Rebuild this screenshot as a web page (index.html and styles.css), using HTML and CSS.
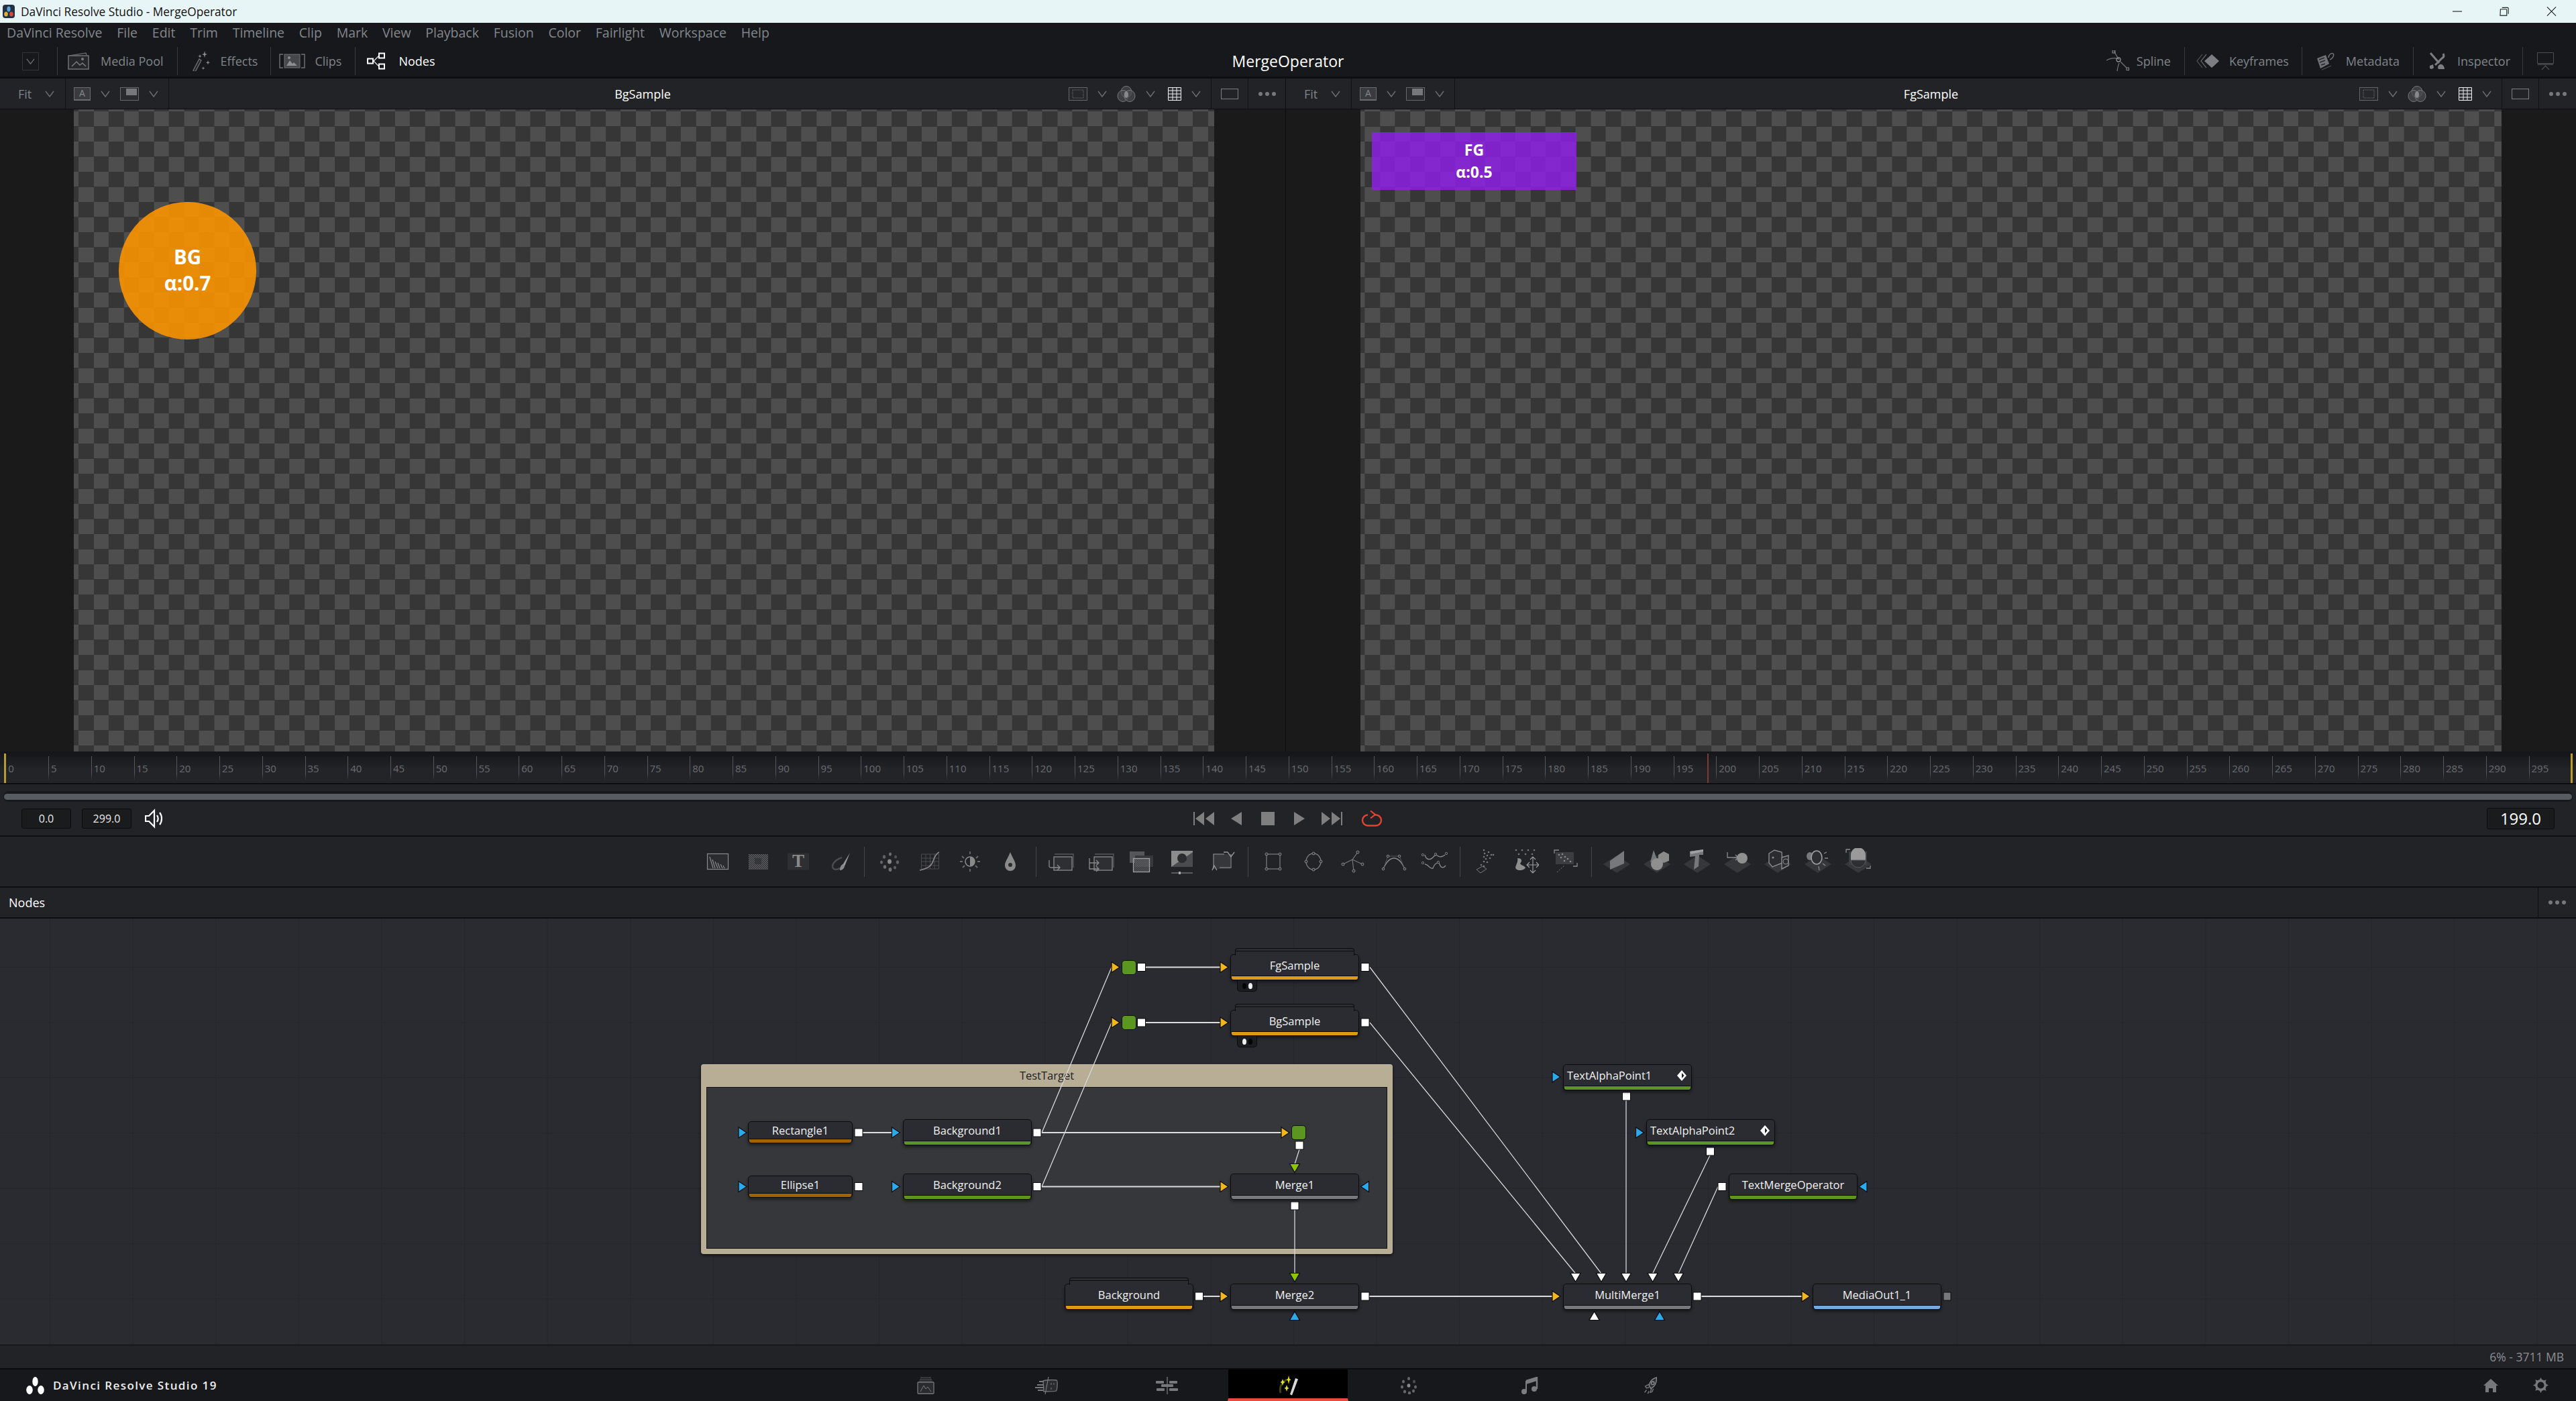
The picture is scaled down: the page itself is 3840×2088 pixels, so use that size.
FILE: index.html
```html
<!DOCTYPE html>
<html lang="en">
<head>
<meta charset="utf-8">
<title>DaVinci Resolve Studio - MergeOperator</title>
<link rel="stylesheet" href="styles.css">
</head>
<body>
<svg class="defs" width="0" height="0" aria-hidden="true">
  <defs>
    <symbol id="chev" viewBox="0 0 14 10"><path d="M1 1l6 8 6-8" fill="none" stroke="#6d6e72" stroke-width="1.4"/></symbol>
    <symbol id="dots" viewBox="0 0 28 8"><circle cx="4" cy="4" r="3" fill="#77787c"/><circle cx="14" cy="4" r="3" fill="#77787c"/><circle cx="24" cy="4" r="3" fill="#77787c"/></symbol>
    <symbol id="boxB" viewBox="0 0 28 20"><rect x=".5" y=".5" width="27" height="19" fill="#2a2b2f" stroke="#66676b"/><rect x="9" y="2" width="16" height="10" fill="#77787c"/></symbol>
    <symbol id="safe" viewBox="0 0 28 20"><rect x=".5" y=".5" width="27" height="19" fill="#26272a" stroke="#66676b"/><rect x="6" y="4" width="16" height="12" fill="none" stroke="#77787c" stroke-dasharray="1 1"/></symbol>
    <symbol id="venn" viewBox="0 0 28 24"><ellipse cx="14" cy="9" rx="8" ry="8.5" fill="#3c3d40" stroke="#77787c"/><ellipse cx="9" cy="15" rx="8" ry="8.5" fill="#4a4b4e" fill-opacity=".7" stroke="#77787c"/><ellipse cx="19" cy="15" rx="8" ry="8.5" fill="#4a4b4e" fill-opacity=".7" stroke="#77787c"/><ellipse cx="14" cy="13" rx="3" ry="5" fill="#88898d"/></symbol>
    <symbol id="grid" viewBox="0 0 20 20"><path d="M.5.5h19v19H.5zM.5 5h19M.5 10h19M.5 15h19M7 .5v19M13 .5v19" fill="#2d2e31" stroke="#f0f0f0"/></symbol>
    <symbol id="sq" viewBox="0 0 26 16"><rect x=".5" y=".5" width="25" height="15" fill="none" stroke="#77787c" stroke-width="1.2"/></symbol>
    <pattern id="nz" width="3" height="3" patternUnits="userSpaceOnUse"><rect width="1.5" height="1.5" fill="#6d6d6f"/><rect x="1.5" y="1.5" width="1.5" height="1.5" fill="#6d6d6f"/></pattern>
    <polygon id="tr" points="-6,-8 6,0 -6,8" stroke="#0c0c0e" stroke-width="1.2"/>
    <polygon id="tl" points="6,-8 -6,0 6,8" stroke="#0c0c0e" stroke-width="1.2"/>
    <polygon id="td" points="-7.5,-6.5 7.5,-6.5 0,6.5" stroke="#0c0c0e" stroke-width="1.2"/>
    <polygon id="tu" points="-7.5,6.5 7.5,6.5 0,-6.5" stroke="#0c0c0e" stroke-width="1.2"/>
    <rect id="op" x="-6" y="-6" width="12" height="12" fill="#fff" stroke="#0c0c0e"/>
  </defs>
</svg>

<header class="titlebar">
  <svg class="appicon" viewBox="0 0 18 20"><rect width="18" height="20" rx="4" fill="#243044"/><ellipse cx="9" cy="6.5" rx="2.6" ry="4" fill="#58a8e0"/><ellipse cx="5" cy="14" rx="2.8" ry="3.6" fill="#e0b030"/><ellipse cx="13" cy="14" rx="2.8" ry="3.6" fill="#d84a3a"/></svg>
  <span class="titlebar-text">DaVinci Resolve Studio - MergeOperator</span>
  <div class="winctl">
    <svg viewBox="0 0 16 16"><path d="M0 8h15" stroke="#222" stroke-width="1.2"/></svg>
    <svg viewBox="0 0 16 16"><path d="M1.5 4.5h9a1 1 0 0 1 1 1v9h-10.500zM4 2h9a1 1 0 0 1 1 1v9" fill="none" stroke="#222" stroke-width="1.2"/></svg>
    <svg viewBox="0 0 16 16"><path d="M1 1l14 14M15 1L1 15" stroke="#222" stroke-width="1.2"/></svg>
  </div>
</header>

<nav class="menubar">
  <span>DaVinci Resolve</span><span>File</span><span>Edit</span><span>Trim</span><span>Timeline</span><span>Clip</span><span>Mark</span><span>View</span><span>Playback</span><span>Fusion</span><span>Color</span><span>Fairlight</span><span>Workspace</span><span>Help</span>
</nav>

<section class="toolbar">
  <div class="tb-side">
    <div class="tb-collapse"><svg class="ic-chev" viewBox="0 0 14 10"><use href="#chev"/></svg></div>
    <div class="tb-item it-media">
      <svg class="ic-media" viewBox="0 0 33 26"><path d="M3 5L27 1l1 3" fill="none" stroke="#5f6367" stroke-width="1.500"/><rect x="1" y="5" width="30" height="20" fill="#26272a" stroke="#6f7377" stroke-width="1.500"/><path d="M6 21l7-7 5 5 4-3 5 5" fill="none" stroke="#777b7f" stroke-width="1.500"/><circle cx="22" cy="10" r="2" fill="#777b7f"/></svg>
      <span>Media Pool</span>
    </div>
    <div class="tb-item it-fx">
      <svg class="ic-fx" viewBox="0 0 31 30"><path d="M4 29l9-17 3 2-9 17z" fill="#26272a" stroke="#6f7377" stroke-width="1.300"/><path d="M21 0l1 4 3 1-3 1-1 4-1-4-3-1 3-1zM14 5l.7 2 2 .7-2 .7-.7 2-.7-2-2-.7 2-.7zM26 14l.8 2.500 2.500.8-2.500.8-.8 2.500-.8-2.500-2.500-.8 2.500-.8zM19 23l.6 2 2 .6-2 .6-.6 2-.6-2-2-.6 2-.6z" fill="#8a8e92"/></svg>
      <span>Effects</span>
    </div>
    <div class="tb-item it-clips">
      <svg class="ic-clips" viewBox="0 0 39 22"><path d="M6 1H1v20h5M33 1h5v20h-5" fill="none" stroke="#6f7377" stroke-width="1.400"/><rect x="8" y="1" width="23" height="20" fill="#45474a" stroke="#6f7377"/><path d="M11 18l5-8 4 5 2-2 5 5z" fill="#8a8e92"/><circle cx="15" cy="6" r="2" fill="#8a8e92"/></svg>
      <span>Clips</span>
    </div>
    <div class="tb-item it-nodes is-active">
      <svg class="ic-nodes" viewBox="0 0 31 26"><path d="M11 13L19 5M11 13l8 8" fill="none" stroke="#e6e6e6" stroke-width="1.300"/><rect x="2" y="9.500" width="8" height="7" fill="none" stroke="#fff" stroke-width="2"/><rect x="19" y="1.500" width="8" height="7" fill="none" stroke="#fff" stroke-width="2"/><rect x="19" y="17.500" width="8" height="7" fill="none" stroke="#fff" stroke-width="2"/></svg>
      <span>Nodes</span>
    </div>
  </div>
  <div class="tb-title">MergeOperator</div>
  <div class="tb-side tb-right">
    <div class="tb-item it-spline">
      <svg class="ic-spline" viewBox="0 0 34 32"><path d="M0 15C8 11 14 11 18 13L11 1M21 17l9 9M19 19c-2 4-2 7-3 12" fill="none" stroke="#6f7377" stroke-width="1.300"/><circle cx="18" cy="14" r="3" fill="none" stroke="#8a8e92" stroke-width="1.300"/><rect x="9" y="0" width="4" height="4" fill="none" stroke="#8a8e92"/><rect x="30" y="26" width="3.500" height="3.500" fill="none" stroke="#8a8e92"/></svg>
      <span>Spline</span>
    </div>
    <div class="tb-item it-key">
      <svg class="ic-key" viewBox="0 0 35 22"><path d="M9 1L1 11l8 10" fill="none" stroke="#55585c" stroke-width="1.200"/><path d="M15 1L7 11l8 10" fill="none" stroke="#5f6367" stroke-width="1.300"/><path d="M23 1L12 11l11 10 11-10z" fill="#7b7f83"/></svg>
      <span>Keyframes</span>
    </div>
    <div class="tb-item it-meta">
      <svg class="ic-meta" viewBox="0 0 28 28"><path d="M2 10L15 5l5 13L7 25z" fill="#6f7377"/><path d="M19 9c0-4 4-8 7-6 2 2-1 8-5 9" fill="none" stroke="#6f7377" stroke-width="1.500"/><path d="M5 12l8-3M6 16l8-3M8 20l6-2" stroke="#26272a" stroke-width="1.500"/><path d="M9 27l14-6" stroke="#55585c"/></svg>
      <span>Metadata</span>
    </div>
    <div class="tb-item it-insp">
      <svg class="ic-insp" viewBox="0 0 25 26"><path d="M3 1l13 15" stroke="#7b7f83" stroke-width="3"/><path d="M22 2c2 4 0 6-2 7l-10 10" fill="none" stroke="#7b7f83" stroke-width="3"/><path d="M17 18c4-1 7 3 7 7h-9c-2-3 0-6 2-7zM2 20l5-2 1 5-3 2-3-1z" fill="#7b7f83"/></svg>
      <span>Inspector</span>
    </div>
    <div class="tb-end">
      <svg class="ic-mon" viewBox="0 0 25 26"><path d="M.5.5h24v16H.5z" fill="none" stroke="#4b4d50"/><path d="M1 18h23" stroke="#4b4d50" stroke-width="1.500"/><path d="M7 26l5.500-6 5.500 6" fill="none" stroke="#4b4d50" stroke-width="1.300"/></svg>
    </div>
  </div>
</section>

<section class="viewers">
  <article class="viewer viewer-left">
    <div class="vh">
      <div class="vh-group">
        <div class="vh-fit"><span>Fit</span><svg class="chev"><use href="#chev"/></svg></div>
        <div class="vh-ab">
          <span class="boxa">A</span><svg class="chev"><use href="#chev"/></svg>
          <svg class="box"><use href="#boxB"/></svg><svg class="chev"><use href="#chev"/></svg>
        </div>
      </div>
      <div class="vh-name">BgSample</div>
      <div class="vh-group vh-end">
        <div class="vh-opts">
          <svg class="box"><use href="#safe"/></svg><svg class="chev"><use href="#chev"/></svg>
          <svg class="vennbox"><use href="#venn"/></svg><svg class="chev"><use href="#chev"/></svg>
          <svg class="gridbox"><use href="#grid"/></svg><svg class="chev"><use href="#chev"/></svg>
        </div>
        <div class="vh-cell"><svg class="sqbox"><use href="#sq"/></svg></div>
        <div class="vh-cell"><svg class="dotbox"><use href="#dots"/></svg></div>
      </div>
    </div>
    <div class="vbody">
      <div class="checker checker-left">
        <div class="bg-sample"><span>BG</span><span>α:0.7</span></div>
      </div>
    </div>
  </article>
  <article class="viewer viewer-right">
    <div class="vh">
      <div class="vh-group">
        <div class="vh-fit"><span>Fit</span><svg class="chev"><use href="#chev"/></svg></div>
        <div class="vh-ab">
          <span class="boxa">A</span><svg class="chev"><use href="#chev"/></svg>
          <svg class="box"><use href="#boxB"/></svg><svg class="chev"><use href="#chev"/></svg>
        </div>
      </div>
      <div class="vh-name">FgSample</div>
      <div class="vh-group vh-end">
        <div class="vh-opts">
          <svg class="box"><use href="#safe"/></svg><svg class="chev"><use href="#chev"/></svg>
          <svg class="vennbox"><use href="#venn"/></svg><svg class="chev"><use href="#chev"/></svg>
          <svg class="gridbox"><use href="#grid"/></svg><svg class="chev"><use href="#chev"/></svg>
        </div>
        <div class="vh-cell"><svg class="sqbox"><use href="#sq"/></svg></div>
        <div class="vh-cell"><svg class="dotbox"><use href="#dots"/></svg></div>
      </div>
    </div>
    <div class="vbody vbody-right">
      <div class="checker checker-right">
        <div class="fg-sample"><span>FG</span><span>α:0.5</span></div>
      </div>
    </div>
  </article>
</section>

<section class="ruler">
  <span>0</span><span>5</span><span>10</span><span>15</span><span>20</span><span>25</span><span>30</span><span>35</span><span>40</span><span>45</span><span>50</span><span>55</span><span>60</span><span>65</span><span>70</span><span>75</span><span>80</span><span>85</span><span>90</span><span>95</span><span>100</span><span>105</span><span>110</span><span>115</span><span>120</span><span>125</span><span>130</span><span>135</span><span>140</span><span>145</span><span>150</span><span>155</span><span>160</span><span>165</span><span>170</span><span>175</span><span>180</span><span>185</span><span>190</span><span>195</span><span>200</span><span>205</span><span>210</span><span>215</span><span>220</span><span>225</span><span>230</span><span>235</span><span>240</span><span>245</span><span>250</span><span>255</span><span>260</span><span>265</span><span>270</span><span>275</span><span>280</span><span>285</span><span>290</span><span>295</span>
  <i class="mark mark-start"></i><i class="mark mark-end"></i><i class="playhead"></i>
</section>

<section class="transport">
  <div class="scrub"><div class="scrub-fill"></div></div>
  <div class="tp-row">
    <div class="tp-left">
      <span class="field">0.0</span><span class="field">299.0</span>
      <svg class="ic-spk" viewBox="0 0 27 30"><path d="M1 11h5l8-8v24l-8-8H1z" fill="none" stroke="#fff" stroke-width="2.200"/><path d="M18 10c2 3 2 7 0 10M22 6c4 5 4 13 0 18" fill="none" stroke="#fff" stroke-width="2.200"/></svg>
    </div>
    <div class="tp-mid">
      <svg class="ic-skip" viewBox="0 0 31 20"><path d="M0 0h2v20H0zM16 0L3 10l13 10zM31 0L18 10l13 10z" fill="#7f7f7f"/></svg>
      <svg class="ic-tri" viewBox="0 0 16 20"><path d="M16 0L0 10l16 10z" fill="#7f7f7f"/></svg>
      <svg class="ic-stop" viewBox="0 0 20 20"><rect width="20" height="20" fill="#7f7f7f"/></svg>
      <svg class="ic-tri" viewBox="0 0 16 20"><path d="M0 0l16 10L0 20z" fill="#7f7f7f"/></svg>
      <svg class="ic-skip" viewBox="0 0 31 20"><path d="M31 0h-2v20h2zM15 0l13 10-13 10zM0 0l13 10L0 20z" fill="#7f7f7f"/></svg>
      <svg class="ic-loop" viewBox="0 0 32 24"><path d="M10 6.500a8 8 0 0 0-8 8 8 8 0 0 0 8 8h12a8 8 0 0 0 8-8 8 8 0 0 0-8-8h-3" fill="none" stroke="#e8412f" stroke-width="2.400"/><path d="M14 .5L21 6l-7 5.500" fill="none" stroke="#e8412f" stroke-width="2.200"/></svg>
    </div>
    <div class="tp-right"><span class="field field-big">199.0</span></div>
  </div>
</section>

<section class="tools">
  <svg class="t" viewBox="0 0 40 40"><rect x="4.500" y="8.500" width="31" height="23" fill="#2b2c30" stroke="#8a8a8a" stroke-width="1.200"/><path d="M8 13l5 17M12 17l4 13M16 20l4 10M20 22l3 8M24 24l3 6M28 26l2 4" stroke="#8a8a8a" stroke-width="1.200"/></svg>
  <svg class="t" viewBox="0 0 40 40"><rect x="6" y="9" width="29" height="23" fill="url(#nz)"/><rect x="15" y="15" width="10" height="9" fill="#2a2b2e" opacity=".6"/></svg>
  <svg class="t" viewBox="0 0 40 40"><rect x="4" y="7.500" width="32" height="25" fill="#2e2f33"/><text x="20" y="28" class="t-letter" text-anchor="middle">T</text></svg>
  <svg class="t" viewBox="0 0 40 40"><path d="M25 14C13 18 8 27 13 31c3 2 7 0 10-1" fill="none" stroke="#4a4b4e" stroke-width="2.500"/><path d="M37 7L26 25l3 2z" fill="#9a9a9a"/><path d="M26 24c-3 2-4 5-4 9 3 0 6-2 7-6z" fill="#8a8a8a"/></svg>
  <i class="t-sep"></i>
  <svg class="t" viewBox="0 0 40 40"><g fill="#6f6f72"><ellipse cx="21" cy="9" rx="2" ry="2.500"/><ellipse cx="12" cy="13" rx="2.200" ry="2.800" opacity=".8"/><ellipse cx="29" cy="13" rx="2" ry="2.500" opacity=".6"/><ellipse cx="8" cy="21" rx="2" ry="2.500" opacity=".9"/><ellipse cx="32" cy="21" rx="2.200" ry="2.800" opacity=".8"/><ellipse cx="13" cy="28" rx="2.200" ry="2.800"/><ellipse cx="21" cy="32" rx="2.400" ry="3"/><ellipse cx="28" cy="29" rx="2" ry="2.500" opacity=".8"/><ellipse cx="20" cy="20" rx="3" ry="3.500" fill="#8a8a8a"/></g></svg>
  <svg class="t" viewBox="0 0 40 40"><path d="M7.500 9h26v22h-26zM7.500 15h26M7.500 20h26M7.500 26h26M14 9v22M20.500 9v22M27 9v22" fill="none" stroke="#4a4b4e"/><path d="M5 33c10-2 18-6 20-14 2-6 5-11 9-13" fill="none" stroke="#8a8a8a" stroke-width="1.500"/></svg>
  <svg class="t" viewBox="0 0 40 40"><circle cx="20" cy="20" r="7" fill="none" stroke="#8a8a8a" stroke-width="1.600"/><path d="M20 13a7 7 0 0 1 0 14z" fill="#8a8a8a"/><path d="M20 5v4M20 31v4M8 12l3 3M32 12l-3 3M5 20h4M31 20h4M9 29l3-3M31 29l-3-3" stroke="#6a6a6c" stroke-width="1.800"/></svg>
  <svg class="t" viewBox="0 0 40 40"><path d="M20 6c4 10 8 14 8 20a8 8 0 0 1-16 0c0-6 4-10 8-20z" fill="#8a8a8a"/><circle cx="20" cy="25" r="3" fill="#2b2c30"/></svg>
  <i class="t-sep"></i>
  <svg class="t" viewBox="0 0 40 40"><path d="M10 9h28v20" fill="none" stroke="#58595c" stroke-width="1.300"/><rect x="9" y="13" width="27" height="20" fill="#2e2f33" stroke="#8a8a8a" stroke-width="1.300"/><path d="M2 18v9c0 2 2 2 4 2h12M14 25l4 4-4 4" fill="none" stroke="#8a8a8a" stroke-width="1.300"/></svg>
  <svg class="t" viewBox="0 0 40 40"><path d="M10 9h28v20" fill="none" stroke="#58595c" stroke-width="1.300"/><rect x="9" y="13" width="27" height="20" fill="#2e2f33" stroke="#8a8a8a" stroke-width="1.300"/><path d="M2 15v16h14M2 22h14M12 18l4 4-4 4M12 27l4 4-4 4" fill="none" stroke="#8a8a8a" stroke-width="1.300"/></svg>
  <svg class="t" viewBox="0 0 40 40"><rect x="2" y="5" width="22" height="17" fill="#56575a"/><rect x="10" y="11" width="27" height="17" fill="#37383c"/><rect x="7.500" y="15.500" width="24" height="20" fill="url(#nz)" stroke="#a0a0a0" stroke-width="1.300"/></svg>
  <svg class="t" viewBox="0 0 40 40"><rect x="4" y="4" width="32" height="24" fill="#8c8c8c"/><path d="M4 28L36 6v22z" fill="#4a4b4e"/><circle cx="20" cy="15" r="7" fill="#2b2c30"/><path d="M4 37h32" stroke="#7a7a7a" stroke-width="1.300"/><rect x="15" y="35" width="3" height="4" fill="#aaa"/></svg>
  <svg class="t" viewBox="0 0 40 40"><rect x="6" y="9" width="26" height="22" fill="#36373b"/><path d="M7 31V9h16M33 9v20H16" fill="none" stroke="#77787b" stroke-width="1.400"/><path d="M28 6l5 7 5-7M5 33l3-7 4 7M22 6h6" fill="none" stroke="#9a9a9a" stroke-width="1.300"/></svg>
  <i class="t-sep"></i>
  <svg class="t" viewBox="0 0 40 40"><rect x="10" y="9" width="20" height="22" fill="none" stroke="#77787b" stroke-width="1.300"/><g fill="#2b2c30" stroke="#8a8a8a"><circle cx="10" cy="9" r="2"/><circle cx="30" cy="9" r="2"/><circle cx="10" cy="31" r="2"/><circle cx="30" cy="31" r="2"/></g></svg>
  <svg class="t" viewBox="0 0 40 40"><ellipse cx="20" cy="20" rx="11" ry="12" fill="none" stroke="#77787b" stroke-width="1.300"/><g fill="#2b2c30" stroke="#8a8a8a"><circle cx="20" cy="8" r="2"/><circle cx="9" cy="20" r="2"/><circle cx="31" cy="20" r="2"/><circle cx="20" cy="32" r="2"/></g></svg>
  <svg class="t" viewBox="0 0 40 40"><path d="M26 6L18 17 4 24M18 17l15 7M18 17l2 17" fill="none" stroke="#77787b" stroke-width="1.200"/><g fill="#2b2c30" stroke="#8a8a8a"><circle cx="26" cy="6" r="2"/><circle cx="4" cy="24" r="2"/><circle cx="33" cy="24" r="2"/><circle cx="20" cy="34" r="2"/></g></svg>
  <svg class="t" viewBox="0 0 40 40"><path d="M4 31C8 22 14 15 20 15s12 7 16 16" fill="none" stroke="#8a8a8a" stroke-width="1.400"/><path d="M4 31l7-19h17l8 19" fill="none" stroke="#55565a"/><g fill="#2b2c30" stroke="#8a8a8a"><circle cx="4" cy="31" r="1.800"/><circle cx="11" cy="12" r="1.800"/><circle cx="28" cy="12" r="1.800"/><circle cx="36" cy="31" r="1.800"/></g></svg>
  <svg class="t" viewBox="0 0 40 40"><path d="M6 10c2 8 8 8 12 4 2-4 6-4 8-2 3 2 8 0 10-2M6 24c5 0 8 8 12 6 3-8 8-10 10-6 2 6 6 6 9 2" fill="none" stroke="#8a8a8a" stroke-width="1.300"/><g fill="#2b2c30" stroke="#77787b"><circle cx="3" cy="10" r="1.700"/><circle cx="22" cy="9" r="1.700"/><circle cx="38" cy="8" r="1.700"/><circle cx="3" cy="22" r="1.700"/><circle cx="26" cy="21" r="1.700"/></g></svg>
  <i class="t-sep"></i>
  <svg class="t" viewBox="0 0 40 40"><g fill="#77787b"><circle cx="18" cy="3" r="1.300"/><circle cx="25" cy="6" r="1.300"/><circle cx="19" cy="8" r="1.300"/><circle cx="29" cy="10" r="1.300"/><circle cx="23" cy="11" r="1.300"/><circle cx="18" cy="13" r="1.300"/><circle cx="27" cy="15" r="1.300"/><circle cx="21" cy="16" r="1.300"/><circle cx="32" cy="10" r="1.300"/><circle cx="18" cy="20" r="1.300"/><circle cx="23" cy="21" r="1.300"/><circle cx="14" cy="25" r="1.300"/><circle cx="18" cy="27" r="1.300"/></g><path d="M7 32l9-5 6 4-9 6z" fill="none" stroke="#77787b"/></svg>
  <svg class="t" viewBox="0 0 40 40"><g fill="#77787b"><circle cx="6" cy="3" r="1.300"/><circle cx="15" cy="3" r="1.300"/><circle cx="24" cy="3" r="1.300"/><circle cx="33" cy="3" r="1.300"/><circle cx="10" cy="9" r="1.300"/><circle cx="20" cy="9" r="1.300"/><circle cx="30" cy="9" r="1.300"/></g><path d="M8 15c6 0 8 3 4 8 2 3 6 3 8 6-2 5-12 5-14 2-3-4 4-9 2-16z" fill="#8f8f8f"/><path d="M31 13v24M23 25h16M27 17l4-4 4 4M27 33l4 4 4-4M26 21l-4 4 4 4M36 21l4 4-4 4" fill="none" stroke="#a0a0a0" stroke-width="1.100"/></svg>
  <svg class="t" viewBox="0 0 40 40"><rect x="5" y="6" width="27" height="18" fill="#3c3d41"/><path d="M3 8V3h7M37 22v5h-6" fill="none" stroke="#8a8a8a" stroke-width="1.300"/><g fill="#8a8a8a"><circle cx="10" cy="10" r="1.300"/><circle cx="15" cy="9" r="1.300"/><circle cx="13" cy="14" r="1.300"/><circle cx="19" cy="13" r="1.300"/><circle cx="23" cy="16" r="1.300"/><circle cx="18" cy="19" r="1.300"/><circle cx="27" cy="20" r="1.300"/></g><path d="M7 36l11-10" stroke="#77787b" stroke-dasharray="2 2"/></svg>
  <i class="t-sep"></i>
  <svg class="t" viewBox="0 0 40 40"><path d="M0 24l20-13 20 13-20 13z" fill="#36373b"/><path d="M10 19L31 4v19L10 32z" fill="#77787b"/></svg>
  <svg class="t" viewBox="0 0 40 40"><path d="M0 24l20-13 20 13-20 13z" fill="#36373b"/><path d="M10 21L15 3l6 16z" fill="#77787b"/><path d="M22 10l8-5 8 4v10l-8 3-8-4z" fill="#8a8a8a"/><circle cx="20" cy="24" r="9" fill="#8f8f8f"/></svg>
  <svg class="t" viewBox="0 0 40 40"><path d="M0 24l20-13 20 13-20 13z" fill="#36373b"/><path d="M9 5L29 2v8h-6l-1 17-7 5 2-20-8 1z" fill="#77787b"/><path d="M9 5L29 2v3L11 9z" fill="#a0a0a0"/></svg>
  <svg class="t" viewBox="0 0 40 40"><path d="M0 24l20-13 20 13-20 13z" fill="#36373b"/><path d="M5 6v8h16M17 10l4 4-4 4" fill="none" stroke="#8a8a8a" stroke-width="1.300"/><circle cx="27" cy="15" r="8" fill="#8f8f8f"/></svg>
  <svg class="t" viewBox="0 0 40 40"><path d="M0 24l20-13 20 13-20 13z" fill="#36373b"/><path d="M7 8l8-5 11 3 1 16-15 6-5-6z" fill="#2b2c30" stroke="#8a8a8a" stroke-width="1.400"/><path d="M26 14l10-3v15l-10 5z" fill="#2b2c30" stroke="#8a8a8a" stroke-width="1.400"/><circle cx="13" cy="14" r="1.600" fill="#8a8a8a"/><circle cx="32" cy="20" r="4" fill="none" stroke="#8a8a8a"/></svg>
  <svg class="t" viewBox="0 0 40 40"><path d="M0 24l20-13 20 13-20 13z" fill="#36373b"/><ellipse cx="8" cy="12" rx="5" ry="6" fill="#77787b"/><ellipse cx="18" cy="14" rx="8" ry="10" fill="#2e2f33" stroke="#a0a0a0" stroke-width="1.600"/><path d="M29 8l4-2M30 15h5M27 23l4 3M21 27l1 6" stroke="#8a8a8a" stroke-width="1.300"/></svg>
  <svg class="t" viewBox="0 0 40 40"><path d="M0 24l20-13 20 13-20 13z" fill="#36373b"/><rect x="6" y="5" width="27" height="20" fill="#3c3d41"/><path d="M9 10a11 11 0 0 1 22 0v8H9z" fill="#9a9a9a"/><path d="M9 18h22a11 11 0 0 1-22 0z" fill="#2e2f33" stroke="#58595c"/><path d="M2 7V2h6M38 26v4h-6" fill="none" stroke="#8a8a8a" stroke-width="1.300"/></svg>
</section>

<section class="nodes-head">
  <span class="nodes-title">Nodes</span>
  <div class="nodes-more"><svg class="dotbox"><use href="#dots"/></svg></div>
</section>

<section class="canvas">
  <div class="group">
    <div class="group-title">TestTarget</div>
    <div class="group-body"></div>
  </div>
  <svg class="wires" viewBox="0 1369 3840 635">
    <g class="wire-h">
      <path d="M1286 1688H1330M1553 1688H1911M1553 1768.500H1820M1708 1441.500H1820M1708 1524H1820M1793 1932H1820M2041 1932H2314M2536 1932H2687"/>
    </g>
    <g class="wire-d">
      <path d="M1553 1688L1657 1441.500M1553 1768.500L1657 1524M1937 1713L1930 1735M1930 1803V1898M2042 1524L2348.600 1898M2042 1441.500L2387 1898M2424 1640V1898M2549 1722L2463.600 1898M2561 1768.500L2502 1898"/>
    </g>
    <g fill="#f2b71c">
      <use href="#tr" x="1663" y="1441.500"/><use href="#tr" x="1663" y="1524"/><use href="#tr" x="1825" y="1441.500"/><use href="#tr" x="1825" y="1524"/><use href="#tr" x="1825" y="1768.500"/><use href="#tr" x="1825" y="1932"/><use href="#tr" x="1916" y="1688"/><use href="#tr" x="2320" y="1932"/><use href="#tr" x="2692" y="1932"/>
    </g>
    <g fill="#2aa9ec">
      <use href="#tr" x="1107" y="1688"/><use href="#tr" x="1107" y="1768.500"/><use href="#tr" x="1335.500" y="1688"/><use href="#tr" x="1335.500" y="1768.500"/><use href="#tr" x="2320" y="1605"/><use href="#tr" x="2444.500" y="1688"/>
      <use href="#tl" x="2034.500" y="1768.500"/><use href="#tl" x="2777" y="1768.500"/>
      <use href="#tu" x="1930" y="1961"/><use href="#tu" x="2474" y="1961"/>
    </g>
    <g fill="#8cc400"><use href="#td" x="1930" y="1741"/><use href="#td" x="1930" y="1904"/></g>
    <g fill="#fff">
      <use href="#td" x="2348.600" y="1904"/><use href="#td" x="2387" y="1904"/><use href="#td" x="2424" y="1904"/><use href="#td" x="2463.600" y="1904"/><use href="#td" x="2502" y="1904"/><use href="#tu" x="2376.600" y="1961"/>
    </g>
    <g>
      <use href="#op" x="1701.500" y="1441.500"/><use href="#op" x="1701.500" y="1524"/><use href="#op" x="2035" y="1441.500"/><use href="#op" x="2035" y="1524"/><use href="#op" x="1280" y="1688"/><use href="#op" x="1280" y="1768.500"/><use href="#op" x="1546" y="1688"/><use href="#op" x="1546" y="1768.500"/><use href="#op" x="1937" y="1707"/><use href="#op" x="1930" y="1797"/><use href="#op" x="1787.500" y="1932"/><use href="#op" x="2035" y="1932"/><use href="#op" x="2530" y="1932"/><use href="#op" x="2424.500" y="1634"/><use href="#op" x="2549.500" y="1716"/><use href="#op" x="2567" y="1768.500"/>
      <rect x="2897" y="1926" width="11" height="12" fill="#77787c" stroke="#0c0c0e"/>
    </g>
  </svg>

  <i class="pipe pipe-a"></i><i class="pipe pipe-b"></i><i class="pipe pipe-c"></i>

  <div class="node n-big n-fg stack orange">FgSample</div>
  <div class="badge badge-fg"><b></b><b class="on"></b></div>
  <div class="node n-big n-bg stack orange">BgSample</div>
  <div class="badge badge-bg"><b class="on"></b><b></b></div>
  <div class="node n-small n-rect brown">Rectangle1</div>
  <div class="node n-small n-ell brown">Ellipse1</div>
  <div class="node n-big n-b1 green">Background1</div>
  <div class="node n-big n-b2 green">Background2</div>
  <div class="node n-big n-m1 gray">Merge1</div>
  <div class="node n-big n-back stack orange">Background</div>
  <div class="node n-big n-m2 gray">Merge2</div>
  <div class="node n-big n-mm gray">MultiMerge1</div>
  <div class="node n-big n-t1 green n-key"><span>TextAlphaPoint1</span><svg class="kf" viewBox="0 0 14 16"><path d="M7 0l7 8-7 8-7-8z" fill="#fff"/><path d="M7 4l3.500 4L7 12z" fill="#1a1b1e"/></svg></div>
  <div class="node n-big n-t2 green n-key"><span>TextAlphaPoint2</span><svg class="kf" viewBox="0 0 14 16"><path d="M7 0l7 8-7 8-7-8z" fill="#fff"/><path d="M7 4l3.500 4L7 12z" fill="#1a1b1e"/></svg></div>
  <div class="node n-big n-tm green">TextMergeOperator</div>
  <div class="node n-big n-out blue">MediaOut1_1</div>
</section>

<section class="status"><span>6% - 3711 MB</span></section>

<footer class="pages">
  <div class="brand">
    <svg class="logo" viewBox="0 0 27 26"><ellipse cx="13.500" cy="7" rx="4.200" ry="7" fill="#fff"/><ellipse cx="5" cy="19.500" rx="4.800" ry="6.500" fill="#fff"/><ellipse cx="22" cy="19.500" rx="4.800" ry="6.500" fill="#fff"/></svg>
    <span>DaVinci Resolve Studio 19</span>
  </div>
  <div class="page-tabs">
    <div class="page-tab"><svg class="pg" viewBox="0 0 28 26"><path d="M6 1h16M5 3.500h18M4 6h20" stroke="#55565a"/><rect x="2" y="8" width="24" height="17" rx="1" fill="#2a2b2e" stroke="#77787b" stroke-width="1.300"/><path d="M6 22l5-9 3 5 3-3 5 7" fill="none" stroke="#77787b"/></svg></div>
    <div class="page-tab"><svg class="pg" viewBox="0 0 38 26"><path d="M14 6c2-1 16-2 20-1 2 1 1 16-1 16-3 1-14 1-18 1z" fill="#2a2b2e" stroke="#77787b" stroke-width="1.300"/><path d="M22 0l-5 26" stroke="#77787b" stroke-width="1.200"/><path d="M8 7h7M5 12h10M2 16h12M6 20h8" stroke="#77787b" stroke-width="2"/><path d="M26 9v3M30 9v3M26 16v3" stroke="#77787b"/></svg></div>
    <div class="page-tab"><svg class="pg" viewBox="0 0 36 26"><path d="M18 0v26" stroke="#77787b" stroke-width="1.300"/><g fill="#77787b"><rect x="1" y="6" width="12" height="4" rx="1"/><rect x="21" y="6" width="12" height="4" rx="1"/><rect x="9" y="11" width="18" height="4" rx="1"/><rect x="2" y="17" width="12" height="4" rx="1"/><rect x="21" y="17" width="13" height="4" rx="1"/></g></svg></div>
    <div class="page-tab page-active"><svg class="pg pg-fusion" viewBox="0 0 34 30"><path d="M6 26C3 16 9 10 15 6" fill="none" stroke="#5a6018" stroke-width="3" opacity=".7"/><path d="M20 28l8-24 4 1.500-9 24z" fill="#d8d8d8"/><path d="M18 0l1.200 5 2.300 1.200-2.300 1.200L18 13l-1.200-5.600L14.500 6.200l2.300-1.200zM9 5l1.200 3.500L12.500 10l-2.300 1.200L9 15l-1.200-3.800L5.500 10l2.300-1.500zM15 14l1.200 3.500 2.300 1.500-2.300 1.200L15 24l-1.200-3.800L11.500 19l2.300-1.500z" fill="#e2e225"/></svg></div>
    <div class="page-tab"><svg class="pg" viewBox="0 0 26 26"><g fill="#66676a"><ellipse cx="13" cy="2.500" rx="2" ry="2.500"/><ellipse cx="5" cy="7" rx="2" ry="2.500"/><ellipse cx="21" cy="7" rx="2" ry="2.500" opacity=".7"/><ellipse cx="3" cy="15" rx="2" ry="2.500"/><ellipse cx="23" cy="15" rx="2" ry="2.500"/><ellipse cx="7" cy="22" rx="2.200" ry="2.500"/><ellipse cx="14" cy="24" rx="2.200" ry="2.500"/><ellipse cx="20" cy="21" rx="2" ry="2.500"/><ellipse cx="13" cy="13" rx="2.400" ry="2.800" fill="#8a8a8a"/></g></svg></div>
    <div class="page-tab"><svg class="pg" viewBox="0 0 24 26"><path d="M7 6l16-5v17" fill="none" stroke="#7d7d7f" stroke-width="2.400"/><path d="M7 6l16-5v5L7 11z" fill="#7d7d7f"/><path d="M7 6v16" stroke="#7d7d7f" stroke-width="2"/><ellipse cx="4" cy="22" rx="4" ry="4" fill="#7d7d7f"/><ellipse cx="19" cy="18" rx="4" ry="4" fill="#7d7d7f"/></svg></div>
    <div class="page-tab"><svg class="pg" viewBox="0 0 26 28"><path d="M23 1c-7 2-11 7-12 13l3 5c6-3 10-8 9-18z" fill="#2f3033" stroke="#88898c" stroke-width="1.500"/><circle cx="17" cy="10" r="2.500" fill="none" stroke="#88898c" stroke-width="1.500"/><path d="M11 12l-6 3 2 3 4-1M15 19l-2 6 3-1 2-5M7 21l-3 4M11 23l-2 4" fill="none" stroke="#77787b" stroke-width="1.500"/></svg></div>
  </div>
  <div class="page-end">
    <svg class="ic-home" viewBox="0 0 22 20"><path d="M11 0l11 10h-3v10h-5v-6H8v6H3V10H0z" fill="#77787b"/></svg>
    <svg class="ic-gear" viewBox="0 0 24 24"><path d="M12 5a7 7 0 1 0 0 14 7 7 0 0 0 0-14z" fill="none" stroke="#77787b" stroke-width="3.500"/><path d="M12 0l2 4h-4zM12 24l-2-4h4zM0 12l4-2v4zM24 12l-4 2v-4zM3.500 3.500l4.500 1.500-3 3zM20.500 20.500l-4.500-1.500 3-3zM3.500 20.500l1.500-4.500 3 3zM20.500 3.500l-1.500 4.500-3-3z" fill="#77787b"/></svg>
  </div>
</footer>
</body>
</html>
```
FILE: styles.css
```css
* { box-sizing: border-box; }
html, body { margin: 0; padding: 0; background: #17181b; }
body {
  width: 3840px; height: 2088px; overflow: hidden;
  display: flex; flex-direction: column;
  font-family: "Open Sans", "Liberation Sans", sans-serif;
}
.defs { position: absolute; }
svg { display: block; flex: none; }

/* window title */
.titlebar {
  height: 34px; flex: none; display: flex; align-items: center;
  background: #e8f5f7; color: #111; font-size: 17.3px; padding-left: 4px;
}
.appicon { width: 18px; height: 20px; margin-right: 9px; }
.titlebar-text { flex: 1; }
.winctl { display: flex; gap: 55px; padding-right: 29px; }
.winctl svg { width: 15px; height: 16px; }

/* menu */
.menubar {
  height: 36px; flex: none; display: flex; align-items: flex-start; gap: 21.75px;
  background: #17181b; color: #82878e; font-size: 19.5px; line-height: 26px; padding: 2px 0 0 10px;
}

/* toolbar */
.toolbar {
  height: 47px; flex: none; display: grid; grid-template-columns: 1fr auto 1fr;
  background: #17181b; border-bottom: 3px solid #0e0e10; color: #7f848a; font-size: 18px;
}
.tb-side { display: flex; align-items: flex-start; height: 42px; }
.tb-right { justify-content: flex-end; }
.tb-collapse { width: 85px; height: 42px; display: flex; align-items: center; padding-left: 33px; }
.ic-chev { width: 25px; height: 27px; border: 1px solid #333437; padding: 7px 5px; }
.tb-item {
  height: 42px; display: flex; align-items: center;
  border-left: 1px solid #3a3b3e;
}
.tb-right .tb-item { border-left: 0; border-right: 1px solid #3a3b3e; }
.it-media { padding: 0 20px 0 15px; gap: 16px; }
.it-fx { padding: 0 19px; gap: 14px; }
.it-clips { padding: 0 20px 0 12px; gap: 14px; }
.it-nodes { padding: 0 0 0 16px; gap: 17px; }
.it-spline { padding: 0 20px 0 0; gap: 11px; }
.it-key { padding: 0 19px 0 17px; gap: 14px; }
.it-meta { padding: 0 20px; gap: 17px; }
.it-insp { padding: 0 18px 0 22px; gap: 18px; }
.is-active { color: #fff; }
.ic-media { width: 33px; height: 26px; }
.ic-fx { width: 31px; height: 30px; }
.ic-clips { width: 39px; height: 22px; }
.ic-nodes { width: 31px; height: 26px; }
.ic-spline { width: 34px; height: 32px; }
.ic-key { width: 35px; height: 22px; }
.ic-meta { width: 28px; height: 28px; }
.ic-insp { width: 25px; height: 26px; }
.ic-mon { width: 25px; height: 26px; }
.tb-end { width: 79px; height: 42px; padding: 8px 0 0 21px; }
.tb-title { color: #fff; font-size: 23px; font-weight: 500; line-height: 42px; }

/* viewers */
.viewers { height: 1003px; flex: none; display: flex; }
.viewer { display: flex; flex-direction: column; background: #1a1a1a; }
.viewer-left { width: 1917px; border-right: 1px solid #0e0e10; }
.viewer-right { flex: 1; }
.vh {
  height: 46px; flex: none; display: grid; grid-template-columns: 1fr auto 1fr; align-items: stretch;
  background: #222327; border-bottom: 1px solid #0e0e10; color: #7f848a; font-size: 18px;
}
.vh-name { color: #fff; font-weight: 500; align-self: center; }
.vh-group { display: flex; }
.vh-end { justify-content: flex-end; }
.vh-fit { width: 98px; display: flex; align-items: center; padding-left: 27px; gap: 20px; border-right: 1px solid #111214; }
.vh-fit .chev { margin: 0; }
.vh-ab { width: 154px; display: flex; align-items: center; padding-left: 12px; border-right: 1px solid #111214; }
.vh-opts { display: flex; align-items: center; border-right: 1px solid #111214; }
.vh-cell { width: 55px; display: flex; align-items: center; justify-content: center; border-right: 1px solid #111214; }
.vh-cell:last-child { border-right: 0; }
.chev { width: 14px; height: 10px; margin: 0 15px; }
.boxa { width: 28px; height: 20px; background: #3a3b3f; border: 1px solid #6a6b6f; border-bottom-width: 2px; color: #85868a; font-size: 14px; line-height: 16px; text-align: center; }
.box { width: 28px; height: 20px; }
.vennbox { width: 28px; height: 24px; }
.gridbox { width: 20px; height: 20px; margin-left: 4px; }
.sqbox { width: 26px; height: 16px; }
.dotbox { width: 28px; height: 8px; }
.vbody { height: 957px; padding-left: 110px; }
.vbody-right { padding-left: 111px; }
.checker {
  position: relative; width: 1700px; height: 957px;
  background-image: conic-gradient(#4e4e4e 25%, #363636 0 50%, #4e4e4e 0 75%, #363636 0);
  background-size: 44.9px 45px;
}
.checker-left { background-position: 7px 3px; }
.checker-right { width: 1701px; background-position: 6.400px 3px; }
.bg-sample {
  position: absolute; left: 67px; top: 138px; width: 205px; height: 205px; border-radius: 50%;
  background: rgba(255, 150, 0, .88);
  display: flex; flex-direction: column; align-items: center; justify-content: center;
  padding-bottom: 3px;
  color: #fff; font-weight: 700; font-size: 29.5px; line-height: 39px;
}
.fg-sample {
  position: absolute; left: 17px; top: 34px; width: 305px; height: 86px;
  background: rgba(145, 30, 235, .82);
  display: flex; flex-direction: column; align-items: center; justify-content: center;
  color: #fff; font-weight: 700; font-size: 23px; line-height: 33px;
}

/* ruler */
.ruler {
  height: 49px; flex: none; position: relative; display: flex; padding-left: 8.25px;
  background: linear-gradient(#141519, #232428 55%); border-bottom: 2px solid #0e0e10;
  color: #6b6c70; font-size: 15px;
}
.ruler span {
  flex: none; width: 63.750px; padding: 15px 0 0 4px; line-height: 20px; position: relative;
}
.ruler span::before {
  content: ""; position: absolute; left: 0; top: 7px; height: 36px; width: 1px;
  background: linear-gradient(#55575b 70%, rgba(85, 87, 91, 0));
}
.mark { position: absolute; top: 3px; height: 44px; width: 3px; background: #b99a2a; }
.mark-start { left: 6px; }
.mark-end { right: 5px; }
.playhead { position: absolute; left: 2545px; top: 3px; height: 44px; width: 2px; background: #7a3a36; }

/* transport */
.transport { height: 78px; flex: none; background: #222327; border-bottom: 2px solid #0e0e10; padding-top: 10px; }
.scrub { height: 16px; margin: 0 5px; padding: 4px 1px; border-radius: 8px; background: #17181a; }
.scrub-fill { height: 9px; border-radius: 5px; background: #575c62; }
.tp-row { display: grid; grid-template-columns: 1fr auto 1fr; height: 50px; align-items: center; }
.tp-left { display: flex; align-items: center; gap: 16px; padding-left: 32px; }
.field {
  width: 74px; height: 30px; border-radius: 3px; background: #1a1b1d; border: 1px solid #0c0c0e;
  color: #e8e8e8; font-size: 16px; line-height: 28px; text-align: center;
}
.tp-left .ic-spk { margin-left: 4px; }
.ic-spk { width: 27px; height: 30px; }
.tp-mid { display: flex; align-items: center; gap: 25px; }
.ic-skip { width: 31px; height: 20px; }
.ic-tri { width: 16px; height: 20px; }
.ic-stop { width: 20px; height: 20px; margin: 0 4px; }
.ic-loop { width: 32px; height: 24px; margin-left: 3px; }
.tp-right { display: flex; justify-content: flex-end; padding-right: 32px; }
.field-big { width: 101px; height: 32px; font-size: 24px; line-height: 30px; color: #fff; }

/* tool row */
.tools {
  height: 76px; flex: none; display: flex; justify-content: center; align-items: center;
  background: #222327; border-bottom: 2px solid #0e0e10;
}
.t { width: 60px; height: 40px; padding: 0 10px; }
.t-sep { flex: none; width: 16px; height: 45px; background: linear-gradient(#44454a, #44454a) center / 1px 100% no-repeat; }
.t-letter { font-family: "Liberation Serif", serif; font-size: 27px; font-weight: 700; fill: #8a8a8a; }

/* nodes header */
.nodes-head {
  height: 46px; flex: none; display: flex; align-items: stretch; justify-content: space-between;
  background: #222327; border-bottom: 2px solid #0e0e10;
}
.nodes-title { padding-left: 13px; color: #fff; font-size: 18px; line-height: 44px; font-weight: 500; }
.nodes-more { width: 57px; display: flex; align-items: center; justify-content: center; border-left: 1px solid #0e0e10; }

/* node canvas */
.canvas {
  position: relative; height: 636px; flex: none; overflow: hidden;
  border-bottom: 1px solid #0c0c0e;
  background-color: #2a2b30;
  background-image:
    linear-gradient(90deg, #25262a 1px, transparent 1px),
    linear-gradient(#25262a 1px, transparent 1px);
  background-size: 123.600px 82.400px;
  background-position: 74px 72px;
}
.group {
  position: absolute; left: 1045px; top: 217px; width: 1031px; height: 283px;
  background: #b8ae96; border-radius: 4px; box-shadow: 0 2px 4px rgba(0, 0, 0, .6);
  display: flex; flex-direction: column; padding: 0 8px 8px;
}
.group-title { height: 34px; flex: none; color: #20201e; font-size: 16.500px; line-height: 34px; text-align: center; }
.group-body { flex: 1; background: #36373a; border: 1px solid #111; }
.wires { position: absolute; left: 0; top: 0; width: 3840px; height: 635px; }
.wire-h path { fill: none; stroke: #dcdcdc; stroke-width: 2; }
.wire-d path { fill: none; stroke: #d8d8d8; stroke-width: 1.300; }

.pipe { position: absolute; border-radius: 5px; background: #5a9620; border: 1px solid #111; width: 22px; height: 22px; }
.pipe-a { left: 1672px; top: 62px; }
.pipe-b { left: 1672px; top: 144px; }
.pipe-c { left: 1925px; top: 308px; }

.node {
  position: absolute; background: #2b2c32; border: 1px solid #0c0c0e; border-radius: 5px;
  box-shadow: 0 3px 4px rgba(0, 0, 0, .45);
  color: #f0f0f0; font-size: 16.500px; text-align: center;
}
.node::after {
  content: ""; position: absolute; left: 1px; right: 1px; bottom: 0; height: 5px;
  border-top: 1px solid #0c0c0e; border-radius: 0 0 3px 3px; background: var(--band);
}
.n-big { width: 192px; height: 39px; line-height: 32px; }
.n-small { width: 156px; height: 33px; line-height: 25px; left: 1115px; }
.orange { --band: #dd9a16; }
.brown { --band: #9d6400; }
.green { --band: #5d9424; }
.gray { --band: #77787c; }
.blue { --band: #75aadb; }
.stack::before {
  content: ""; position: absolute; left: 6px; right: 6px; top: -10px; height: 10px;
  border: 1px solid #0c0c0e; border-bottom: 0; border-radius: 4px 4px 0 0;
  background: linear-gradient(#2b2c32 3px, #0c0c0e 3px, #0c0c0e 4px, #2b2c32 4px);
}
.n-fg { left: 1834px; top: 53px; }
.n-bg { left: 1834px; top: 136px; }
.n-rect { top: 302px; }
.n-ell { top: 383px; }
.n-b1 { left: 1346px; top: 299px; }
.n-b2 { left: 1346px; top: 380px; }
.n-m1 { left: 1834px; top: 380px; }
.n-back { left: 1587px; top: 544px; }
.n-m2 { left: 1834px; top: 544px; }
.n-mm { left: 2330px; top: 544px; }
.n-t1 { left: 2330px; top: 217px; }
.n-t2 { left: 2454px; top: 299px; }
.n-tm { left: 2577px; top: 380px; }
.n-out { left: 2702px; top: 544px; }
.n-key { display: flex; justify-content: space-between; padding: 0 7px 0 5px; }
.kf { width: 14px; height: 16px; margin-top: 8px; }
.badge {
  position: absolute; left: 1844px; width: 30px; height: 17px; display: flex; gap: 3px; align-items: center; justify-content: center;
  background: #1c1d20; border: 1px solid #0c0c0e; border-top: 0; border-radius: 0 0 5px 5px;
}
.badge b { width: 6px; height: 9px; border-radius: 50%; background: #050505; }
.badge b.on { background: #f0f0f0; }
.badge-fg { top: 92px; }
.badge-bg { top: 175px; }

/* status */
.status {
  height: 36px; flex: none; background: #222327; border-bottom: 2px solid #0c0c0e;
  color: #8b8d92; font-size: 17.500px; line-height: 34px; text-align: right; padding-right: 18px;
}

/* page bar */
.pages { height: 47px; flex: none; display: grid; grid-template-columns: 1fr auto 1fr; background: #17181b; }
.brand { display: flex; align-items: center; gap: 13px; padding-left: 39px; color: #eee; font-size: 17px; font-weight: 600; letter-spacing: 1.400px; }
.logo { width: 27px; height: 26px; }
.page-tabs { display: flex; }
.page-tab { width: 180px; display: flex; align-items: center; justify-content: center; }
.page-active { background: #000; border-left: 1px solid #17181b; border-right: 1px solid #17181b; border-bottom: 4px solid #e54c3f; padding-top: 4px; }
.pg { height: 26px; width: 38px; }
.pg-fusion { height: 30px; }
.page-end { display: flex; align-items: center; justify-content: flex-end; gap: 52px; padding-right: 41px; }
.ic-home { width: 22px; height: 20px; }
.ic-gear { width: 23px; height: 23px; }
```
